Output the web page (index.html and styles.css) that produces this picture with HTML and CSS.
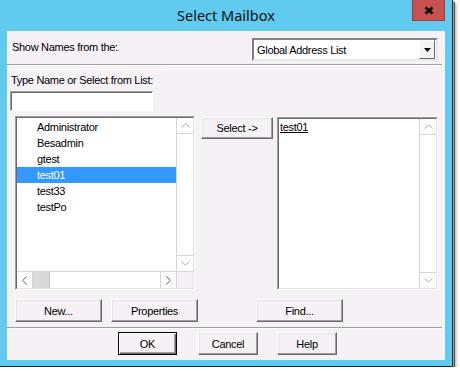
FILE: index.html
```html
<!DOCTYPE html>
<html lang="en">
<head>
  <meta charset="UTF-8">
  <title>Select Mailbox</title>
  <link rel="stylesheet" href="styles.css">
</head>
<body>
  <div class="window">
    <div class="titlebar">
      <span></span>
      <span class="title">Select Mailbox</span>
      <span class="close-cell">
        <span class="close">
          <svg width="10" height="9" viewBox="0 0 10 9"><path d="M1.5 1.5 L8.5 7.5 M8.5 1.5 L1.5 7.5" stroke="#000" stroke-width="2.4" fill="none"/></svg>
        </span>
      </span>
    </div>

    <div class="client">
      <div class="show-row">
        <span class="label show-label">Show Names from the:</span>
        <div class="combo">
          <span class="combo-text">Global Address List</span>
          <span class="drop">
            <svg width="7" height="4" viewBox="0 0 7 4"><path d="M0 0 H7 L3.5 4 Z" fill="#000"/></svg>
          </span>
        </div>
      </div>
      <div class="sep"></div>

      <div class="label type-label">Type Name or Select from List:</div>
      <div class="name-input"><div class="name-inner"></div></div>

      <div class="lists">
        <div class="listbox left-list">
          <div class="lb-inner">
            <div class="lb-main">
              <ul class="items">
                <li>Administrator</li>
                <li>Besadmin</li>
                <li>gtest</li>
                <li class="selected">test01</li>
                <li>test33</li>
                <li>testPo</li>
              </ul>
              <div class="vscroll">
                <span class="sb-btn up"><svg width="9" height="5" viewBox="0 0 9 5"><path d="M0.5 4.5 L4.5 0.8 L8.5 4.5" stroke="#a8a8a8" fill="none"/></svg></span>
                <span class="sb-track"></span>
                <span class="sb-btn down"><svg width="9" height="5" viewBox="0 0 9 5"><path d="M0.5 0.5 L4.5 4.2 L8.5 0.5" stroke="#a8a8a8" fill="none"/></svg></span>
              </div>
            </div>
            <div class="hscroll">
              <span class="hb-btn"><svg width="5" height="9" viewBox="0 0 5 9"><path d="M4.5 0.5 L0.8 4.5 L4.5 8.5" stroke="#606060" fill="none"/></svg></span>
              <span class="thumb"></span>
              <span class="hb-track"></span>
              <span class="hb-btn"><svg width="5" height="9" viewBox="0 0 5 9"><path d="M0.5 0.5 L4.2 4.5 L0.5 8.5" stroke="#606060" fill="none"/></svg></span>
              <span class="corner"></span>
            </div>
          </div>
        </div>

        <button class="btn select-btn">Select -&gt;</button>

        <div class="listbox right-list">
          <div class="lb-inner">
            <div class="lb-main">
              <div class="picked"><u>test01</u></div>
              <div class="vscroll">
                <span class="sb-btn up"><svg width="9" height="5" viewBox="0 0 9 5"><path d="M0.5 4.5 L4.5 0.8 L8.5 4.5" stroke="#a8a8a8" fill="none"/></svg></span>
                <span class="sb-track"></span>
                <span class="sb-btn down"><svg width="9" height="5" viewBox="0 0 9 5"><path d="M0.5 0.5 L4.5 4.2 L8.5 0.5" stroke="#a8a8a8" fill="none"/></svg></span>
              </div>
            </div>
          </div>
        </div>
      </div>

      <div class="btn-row">
        <button class="btn wide">New...</button>
        <button class="btn wide props">Properties</button>
        <button class="btn wide find">Find...</button>
      </div>
      <div class="sep bottom-sep"></div>

      <div class="ok-row">
        <button class="btn ok">OK</button>
        <button class="btn cancel">Cancel</button>
        <button class="btn help">Help</button>
      </div>
    </div>
  </div>
</body>
</html>
```

FILE: styles.css
```css
body {
  margin: 0;
  background: #fff;
  font-family: "Liberation Sans", Arial, sans-serif;
  font-size: 11px;
  letter-spacing: -0.3px;
  color: #000;
}
.window {
  width: 438px;
  height: 360px;
  padding: 0 7px 6px 7px;
  background: #60caef;
  border-right: 1px solid #2a2a2a;
  border-bottom: 1px solid #2a2a2a;
  box-shadow: 1px 1px 0 #9a9a9a, 2px 2px 0 #555, 3px 3px 3px rgba(0,0,0,0.35);
}
.titlebar {
  height: 31px;
  display: grid;
  grid-template-columns: 1fr auto 1fr;
  align-items: start;
}
.title {
  font-family: "Noto Sans", sans-serif;
  font-size: 14.5px;
  letter-spacing: 0;
  color: #111;
  margin-top: 5px;
}
.close-cell {
  display: flex;
  justify-content: flex-end;
  margin-right: 0;
}
.close {
  width: 31px;
  height: 20px;
  background: #c75050;
  border: 1px solid #9a3a3a;
  border-top: none;
  display: flex;
  align-items: center;
  justify-content: center;
}
.client {
  background: #f5f1f5;
  height: 329px;
}
.label {
  display: block;
  line-height: 13px;
  white-space: nowrap;
}
.show-row {
  height: 26px;
  padding: 7px 7px 0 5px;
  display: flex;
  align-items: flex-start;
}
.show-label {
  margin-top: 3px;
}
.combo {
  margin-left: auto;
  width: 182px;
  height: 19px;
  background: #fff;
  border: 2px solid;
  border-color: #808080 #e8e8e8 #e8e8e8 #808080;
  display: flex;
  align-items: center;
}
.combo-text {
  padding-left: 3px;
  flex: 1;
}
.drop {
  width: 14px;
  height: 17px;
  margin-right: 1px;
  background: #f5f1f5;
  border: 1px solid;
  border-color: #fff #696969 #696969 #fff;
  display: flex;
  align-items: center;
  justify-content: center;
}
.sep {
  height: 0;
  margin-right: 3px;
  border-top: 1px solid #a0a0a0;
  border-bottom: 1px solid #fff;
}
.type-label {
  margin: 8px 0 0 4px;
}
.name-input {
  width: 141px;
  height: 18px;
  margin: 4px 0 0 3px;
  border: 1px solid;
  border-color: #a0a0a0 #fff #fff #a0a0a0;
}
.name-inner {
  height: 17px;
  background: #fff;
  border-top: 1px solid #696969;
  border-left: 1px solid #696969;
}
.lists {
  display: flex;
  align-items: flex-start;
  margin: 5px 0 0 8px;
}
.listbox {
  border: 1px solid;
  border-color: #a0a0a0 #fff #fff #a0a0a0;
}
.lb-inner {
  height: 100%;
  display: flex;
  flex-direction: column;
  background: #fff;
  border-top: 1px solid #696969;
  border-left: 1px solid #696969;
  border-right: 1px solid #e3e3e3;
  border-bottom: 1px solid #e3e3e3;
  box-sizing: border-box;
}
.left-list {
  width: 178px;
  height: 172px;
}
.right-list {
  width: 159px;
  height: 171px;
  margin-top: 1px;
  margin-left: 4px;
}
.lb-main {
  flex: 1;
  display: flex;
  min-height: 0;
}
.items {
  flex: 1;
  list-style: none;
  margin: 0;
  padding: 1px 0 0 0;
}
.items li {
  height: 16px;
  line-height: 16px;
  padding-left: 20px;
}
.items li.selected {
  background: #3399ff;
  color: #fff;
}
.picked {
  flex: 1;
  padding: 2px 0 0 1px;
  line-height: 13px;
}
.vscroll {
  width: 16px;
  display: flex;
  flex-direction: column;
  border-left: 1px solid #d6d6d6;
  background: #fff;
}
.sb-btn {
  height: 15px;
  display: flex;
  align-items: center;
  justify-content: center;
  border-bottom: 1px solid #d6d6d6;
}
.sb-btn.down {
  border-bottom: none;
  border-top: 1px solid #d6d6d6;
}
.sb-track {
  flex: 1;
}
.hscroll {
  height: 16px;
  display: flex;
  border-top: 1px solid #d6d6d6;
}
.hb-btn {
  width: 15px;
  display: flex;
  align-items: center;
  justify-content: center;
  border-right: 1px solid #d6d6d6;
}
.hb-btn:nth-of-type(4) {
  border-right: none;
  border-left: 1px solid #d6d6d6;
}
.thumb {
  width: 16px;
  background: #d9d9d9;
  border-right: 1px solid #c0c0c0;
}
.hb-track {
  flex: 1;
}
.corner {
  width: 16px;
  background: #f5f1f5;
  border-left: 1px solid #d6d6d6;
}
.btn {
  font-family: "Liberation Sans", Arial, sans-serif;
  font-size: 11px;
  letter-spacing: -0.3px;
  color: #000;
  background: #f5f1f5;
  border: 1px solid;
  border-color: #fff #696969 #696969 #fff;
  box-shadow: inset -1px -1px 0 #a0a0a0, inset 1px 1px 0 #e3e3e3;
  padding: 0;
  margin: 0;
  box-sizing: border-box;
}
.select-btn {
  width: 72px;
  height: 22px;
  margin-top: 1px;
  margin-left: 6px;
}
.btn-row {
  display: flex;
  margin: 9px 0 0 8px;
}
.wide {
  width: 87px;
  height: 23px;
}
.props {
  margin-left: 9px;
}
.find {
  margin-left: 58px;
}
.bottom-sep {
  margin-top: 5px;
}
.ok-row {
  display: flex;
  margin: 3px 0 0 111px;
}
.ok-row .btn {
  height: 23px;
}
.ok {
  width: 59px;
  border: 1px solid #000;
  box-shadow: inset 1px 1px 0 #fff, inset -1px -1px 0 #696969, inset -2px -2px 0 #a0a0a0;
}
.cancel {
  width: 60px;
  margin-left: 21px;
}
.help {
  width: 60px;
  margin-left: 19px;
}
```
